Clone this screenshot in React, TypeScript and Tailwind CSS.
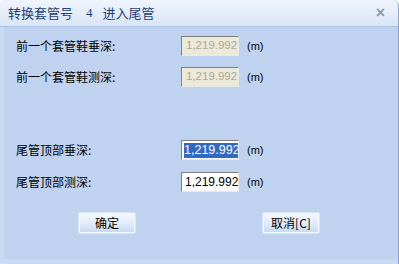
import React from "react";

const cjk = { fontFamily: '"SimSun", "Noto Sans CJK SC", sans-serif' };
const num = { fontFamily: '"Liberation Sans", "DejaVu Sans", sans-serif' };

const Field = ({ label, value, disabled, selected }: { label: string; value: string; disabled?: boolean; selected?: boolean }) => (
  <div className="flex items-center h-[20px]">
    <div className="w-[177px] pl-[12px] text-[12px] text-black" style={cjk}>
      {label}
    </div>
    <div
      className={`w-[58px] h-[20px] border-t border-l border-t-[#808080] border-l-[#808080] border-b border-r border-b-[#e8e8e8] border-r-[#e8e8e8] overflow-hidden flex items-center whitespace-nowrap ${
        selected ? "pl-[2px] text-[12.5px]" : disabled ? "pl-[4px] text-[11.5px]" : "pl-[3px] text-[12px]"
      } ${disabled ? "bg-[#ece9d8] text-[#aca899]" : "bg-white text-black"}`}
      style={num}
    >
      {selected ? <span className="bg-[#316ac5] text-white leading-[15px]">{value}</span> : value}
    </div>
    <div className="ml-[8px] text-[11px] text-black" style={num}>
      (m)
    </div>
  </div>
);

const Btn = ({ children }: { children: React.ReactNode }) => (
  <div
    className="w-[58px] h-[22px] flex items-center justify-center text-[12px] text-black rounded-[2px] border border-[#d6e3f5] bg-gradient-to-b from-[#f5f9ff] via-[#e3ecfa] to-[#c6d8f4] shadow-[inset_0_0_0_1px_#f7faff]"
    style={cjk}
  >
    {children}
  </div>
);

export default function App() {
  return (
    <div className="w-[399px] h-[264px] bg-[#bfd3f0] flex flex-col overflow-hidden rounded-t-[6px] border-r border-[#8ea6c8]">
      <div className="h-[27px] shrink-0 flex items-center justify-between px-[8px] bg-gradient-to-b from-[#f0f5fc] to-[#d9e5f5] border-b border-[#aec4e4]">
        <div className="flex items-center text-[13px] text-[#1e3f74]" style={cjk}>
          <span>转换套管号</span>
          <span className="ml-[13px] mr-[10px]" style={{ fontFamily: '"Liberation Serif", serif' }}>
            4
          </span>
          <span>进入尾管</span>
        </div>
        <div className="text-[16px] text-[#8e9aae] font-bold mr-[5px]" style={num}>
          ×
        </div>
      </div>
      <div className="flex-1 flex flex-col pt-[9px] border-l-[4px] border-b-[5px] border-[#c8dbf5]">
        <Field label="前一个套管鞋垂深:" value="1,219.992" disabled />
        <div className="h-[11px]" />
        <Field label="前一个套管鞋测深:" value="1,219.992" disabled />
        <div className="h-[53px]" />
        <Field label="尾管顶部垂深:" value="1,219.992" selected />
        <div className="h-[12px]" />
        <Field label="尾管顶部测深:" value="1,219.992" />
        <div className="h-[20px]" />
        <div className="flex pl-[74px]">
          <Btn>确定</Btn>
          <div className="w-[126px]" />
          <Btn>取消[C]</Btn>
        </div>
      </div>
    </div>
  );
}
